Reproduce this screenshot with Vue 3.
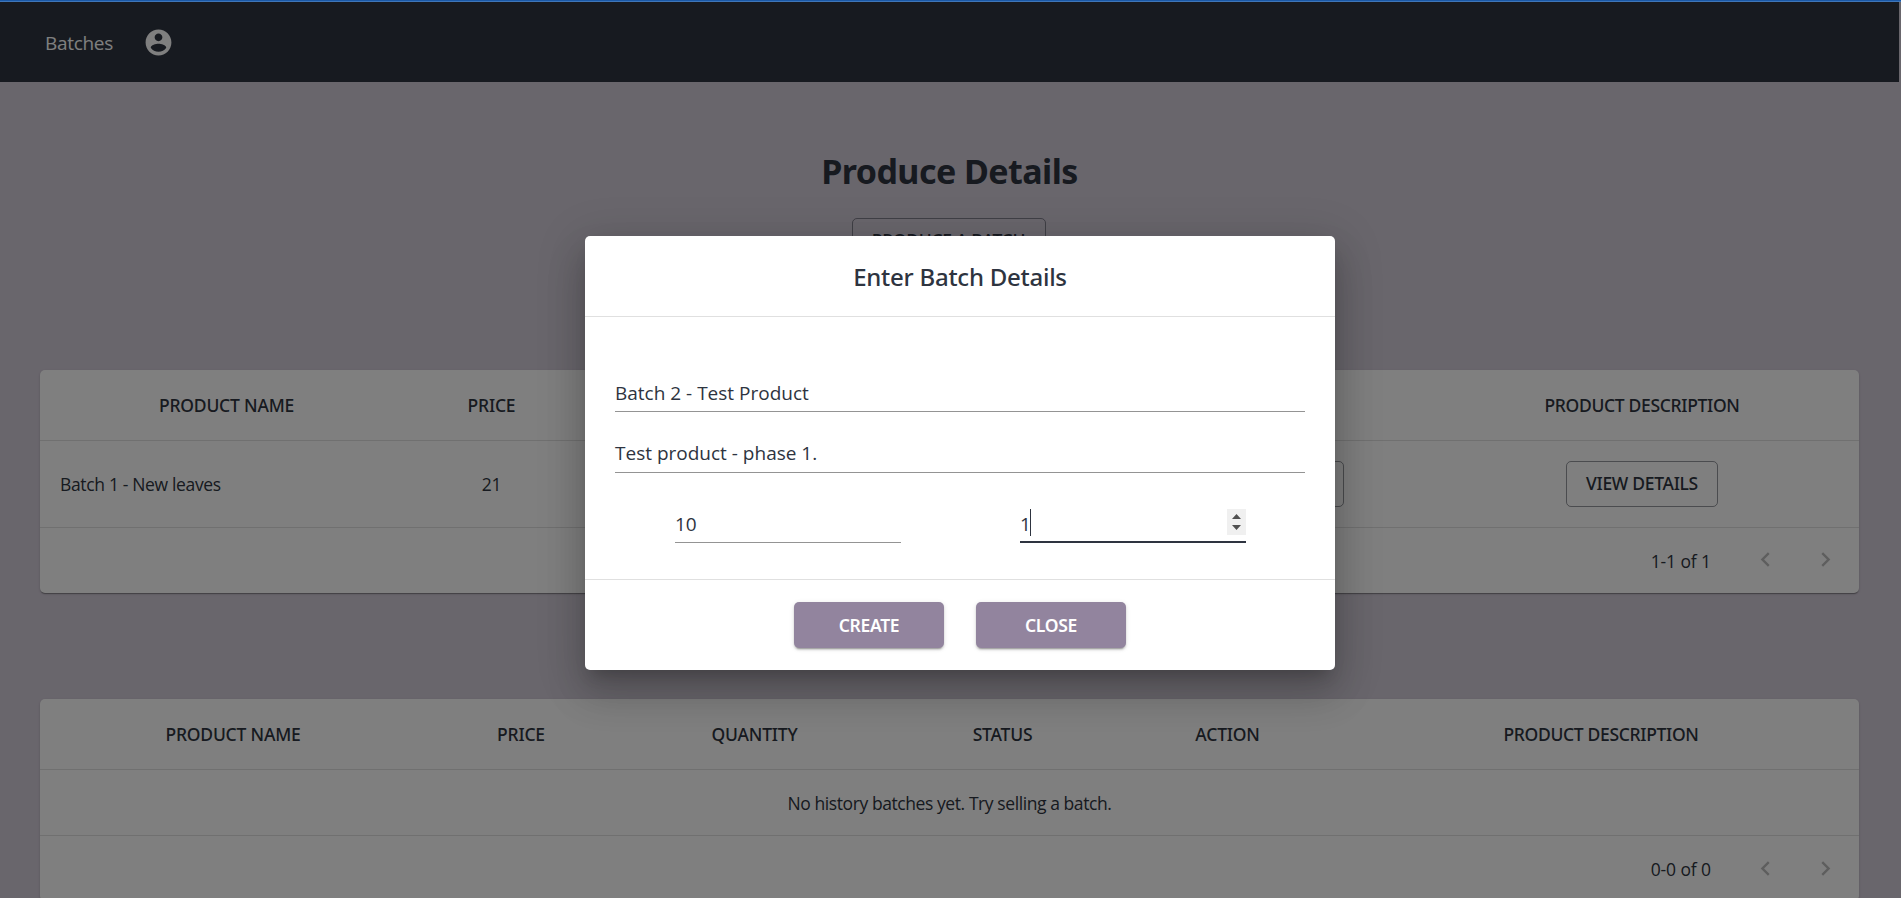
<script setup>
import { ref } from 'vue'

const columns = ['PRODUCT NAME', 'PRICE', 'QUANTITY', 'STATUS', 'ACTION', 'PRODUCT DESCRIPTION']
const batches = ref([{ name: 'Batch 1 - New leaves', price: 21, quantity: 1, status: 'Created' }])
const form = ref({ name: 'Batch 2 - Test Product', description: 'Test product - phase 1.', price: '10', quantity: '1' })
</script>

<template>
  <div class="page">
    <header class="nav">
      <span class="nav-link">Batches</span>
      <svg class="account" viewBox="0 0 24 24"><path d="M12 2C6.48 2 2 6.48 2 12s4.480 10 10 10 10-4.480 10-10S17.520 2 12 2zm0 3c1.660 0 3 1.340 3 3s-1.340 3-3 3-3-1.340-3-3 1.340-3 3-3zm0 14.200c-2.500 0-4.710-1.280-6-3.220.03-1.990 4-3.080 6-3.080 1.990 0 5.970 1.090 6 3.080-1.290 1.940-3.500 3.220-6 3.220z" /></svg>
    </header>
    <main class="content">
      <h1>Produce Details</h1>
      <button class="outlined produce">PRODUCE A BATCH</button>

      <section class="card current">
        <div class="row head">
          <span v-for="c in columns" :key="c">{{ c }}</span>
        </div>
        <div v-for="b in batches" :key="b.name" class="row body">
          <span class="name">{{ b.name }}</span>
          <span>{{ b.price }}</span>
          <span>{{ b.quantity }}</span>
          <span>{{ b.status }}</span>
          <span><button class="outlined action">SELL</button></span>
          <span><button class="outlined view">VIEW DETAILS</button></span>
        </div>
        <div class="pager">
          <span class="range">1-1 of 1</span>
          <svg class="chev" viewBox="0 0 24 24"><path d="M15.410 7.410L14 6l-6 6 6 6 1.410-1.410L10.830 12z" /></svg>
          <svg class="chev" viewBox="0 0 24 24"><path d="M10 6L8.590 7.410 13.170 12l-4.580 4.590L10 18l6-6z" /></svg>
        </div>
      </section>

      <section class="card history">
        <div class="row head">
          <span v-for="c in columns" :key="c">{{ c }}</span>
        </div>
        <div class="empty">No history batches yet. Try selling a batch.</div>
        <div class="pager">
          <span class="range">0-0 of 0</span>
          <svg class="chev" viewBox="0 0 24 24"><path d="M15.410 7.410L14 6l-6 6 6 6 1.410-1.410L10.830 12z" /></svg>
          <svg class="chev" viewBox="0 0 24 24"><path d="M10 6L8.590 7.410 13.170 12l-4.580 4.590L10 18l6-6z" /></svg>
        </div>
      </section>
    </main>
  </div>

  <div class="backdrop">
    <div class="dialog">
      <h2>Enter Batch Details</h2>
      <div class="fields">
        <div class="field">{{ form.name }}</div>
        <div class="field second">{{ form.description }}</div>
        <div class="pair">
          <div class="field small">{{ form.price }}</div>
          <div class="field small focused">
            <span>{{ form.quantity }}</span><i class="caret"></i>
            <svg class="spinner" viewBox="0 0 19 26"><rect width="19" height="26" fill="#f0f0f0" /><path d="M5 10h9L9.500 5zM5 16h9l-4.500 5z" fill="#505050" /></svg>
          </div>
        </div>
      </div>
      <div class="actions">
        <button class="filled">CREATE</button>
        <button class="filled">CLOSE</button>
      </div>
    </div>
  </div>
  <div class="loading"></div>
</template>

<style>
body {
  background: #d3ccd9;
  overflow: hidden;
}
</style>

<style scoped>
* {
  box-sizing: border-box;
}
.page,
.backdrop {
  font-family: "Noto Sans", "Open Sans", sans-serif;
  color: #2e3440;
}
.page {
  width: 1899px;
  height: 898px;
  overflow: hidden;
}
.nav {
  height: 82px;
  background: #2e3440;
  display: flex;
  align-items: center;
  padding: 2px 0 0 45px;
}
.nav-link {
  color: #fff;
  font-family: "Open Sans", sans-serif;
  font-size: 19px;
  letter-spacing: -0.3px;
  width: 98px;
  padding-top: 2px;
}
.account {
  width: 31px;
  height: 31px;
  fill: #fff;
}
.content {
  padding: 64px 40px 0;
  display: flex;
  flex-direction: column;
  align-items: center;
}
h1 {
  margin: 0;
  font-size: 34px;
  line-height: 50px;
  letter-spacing: -0.55px;
}
button {
  font: 500 17.5px "Noto Sans", "Open Sans", sans-serif;
  letter-spacing: -0.3px;
  color: #2e3440;
  border-radius: 5px;
  padding: 0;
}
.outlined {
  height: 46px;
  background: transparent;
  border: 1px solid rgba(46, 52, 64, 0.5);
  padding-bottom: 2px;
}
.produce {
  width: 194px;
  margin: 22px 2px 0 0;
}
.view {
  width: 152px;
}
.action {
  width: 263px;
}
.card {
  width: 100%;
  background: #fff;
  border-radius: 5px;
  box-shadow: 0 2px 1px -1px rgba(0, 0, 0, 0.2), 0 1px 1px rgba(0, 0, 0, 0.14), 0 1px 3px rgba(0, 0, 0, 0.12);
}
.current {
  margin-top: 106px;
}
.history {
  margin-top: 106px;
}
.row {
  display: grid;
  align-items: center;
  text-align: center;
  border-bottom: 1px solid #e0e0e0;
}
.current .row {
  grid-template-columns: 373px 157px 220px 210px 425px 434px;
}
.history .row {
  grid-template-columns: 386px 190px 277px 219px 231px 516px;
}
.head {
  height: 71px;
  font-size: 17.5px;
  font-weight: 500;
  letter-spacing: -0.2px;
}
.head > :last-child {
  letter-spacing: -0.32px;
}
.body {
  height: 87px;
}
.body,
.empty,
.pager {
  font-family: "Open Sans", sans-serif;
  font-size: 17.5px;
  letter-spacing: -0.34px;
}
.name {
  text-align: left;
  padding-left: 20px;
}
.empty {
  height: 66px;
  line-height: 66px;
  text-align: center;
  letter-spacing: -0.42px;
  border-bottom: 1px solid #e0e0e0;
}
.pager {
  height: 65px;
  display: flex;
  align-items: center;
  justify-content: flex-end;
  padding-right: 19px;
}
.range {
  margin-right: 40px;
  letter-spacing: -0.1px;
}
.chev {
  width: 29px;
  height: 29px;
  fill: #bdbdbd;
}
.chev + .chev {
  margin-left: 31px;
}
.current .chev {
  margin-bottom: 2px;
}
.backdrop {
  position: absolute;
  inset: 0;
  background: rgba(0, 0, 0, 0.5);
  padding: 8px 0 0 19px;
  display: flex;
  align-items: center;
  justify-content: center;
}
.dialog {
  width: 750px;
  height: 434px;
  background: #fff;
  border-radius: 5px;
  box-shadow: 0 11px 15px -7px rgba(0, 0, 0, 0.2), 0 24px 38px 3px rgba(0, 0, 0, 0.14), 0 9px 46px 8px rgba(0, 0, 0, 0.12);
}
h2 {
  margin: 0;
  height: 81px;
  line-height: 81px;
  text-align: center;
  font-size: 24px;
  font-weight: 500;
  letter-spacing: -0.25px;
  border-bottom: 1px solid #e0e0e0;
}
.fields {
  height: 263px;
  padding: 58px 30px 0;
  border-bottom: 1px solid #e0e0e0;
}
.field {
  height: 37px;
  line-height: 36px;
  border-bottom: 1px solid #949494;
  font-family: "Open Sans", sans-serif;
  font-size: 19px;
}
.second {
  margin-top: 24px;
  line-height: 34px;
}
.pair {
  display: flex;
  justify-content: space-between;
  padding: 33px 59px 0 60px;
}
.small {
  width: 226px;
}
.focused {
  display: flex;
  align-items: center;
  height: 37px;
  border-bottom: 2px solid #2e3440;
}
.caret {
  width: 1px;
  height: 27px;
  background: #2e3440;
  margin-left: -1px;
  margin-bottom: 2px;
}
.spinner {
  width: 19px;
  height: 26px;
  margin: 0 0 3px auto;
}
.actions {
  height: 90px;
  display: flex;
  align-items: center;
  justify-content: center;
  gap: 32px;
}
.filled {
  width: 150px;
  height: 46px;
  border: 0;
  background: #92849e;
  color: #fff;
  font-weight: 600;
  box-shadow: 0 3px 1px -2px rgba(0, 0, 0, 0.2), 0 2px 2px rgba(0, 0, 0, 0.14), 0 1px 5px rgba(0, 0, 0, 0.12);
}
.loading {
  position: absolute;
  top: 0;
  left: 0;
  right: 0;
  height: 2px;
  background: linear-gradient(#1a58a6 50%, #3f76b8 50%);
}
</style>
